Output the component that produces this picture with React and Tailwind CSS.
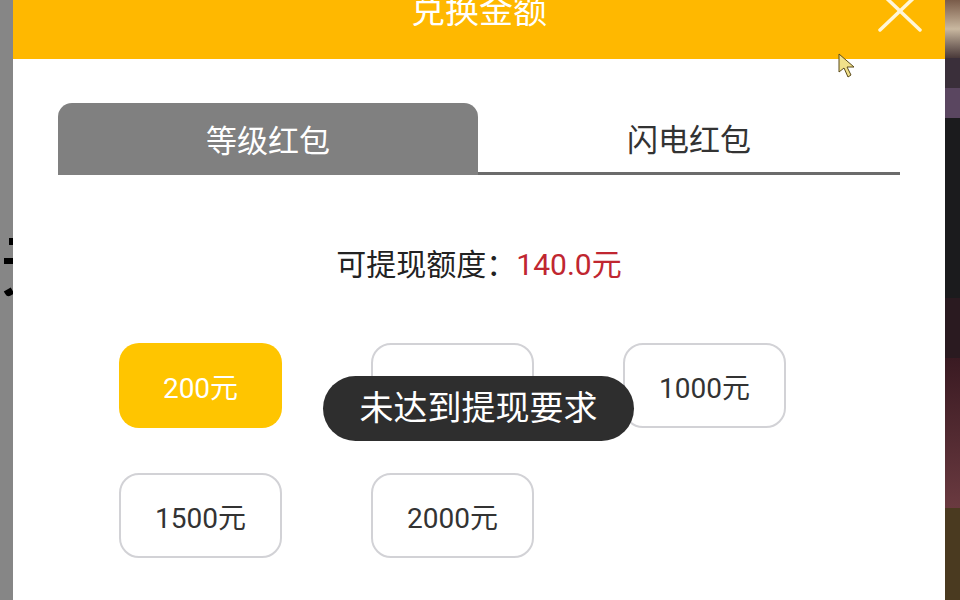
import React from "react";

const amounts = [
  { label: "200元", active: true },
  { label: "500元" },
  { label: "1000元" },
  { label: "1500元" },
  { label: "2000元" },
];

const App = () => {
  return (
    <div className="w-[960px] h-[600px] flex overflow-hidden font-['Roboto','Noto_Sans_CJK_SC',sans-serif]">
      {/* left edge of the page behind the dialog */}
      <div className="w-[13px] h-full bg-[#868686] flex flex-col items-end">
        <div className="mt-[238px] w-[4px] h-[7px] bg-black" />
        <div className="mt-[13px] w-[9px] h-[6px] bg-black" />
        <div className="mt-[25px] w-[8px] h-[7px] bg-black rounded-bl-[4px] -rotate-[30deg]" />
      </div>

      {/* dialog */}
      <div className="relative flex-1 h-full bg-white flex flex-col">
        <div className="relative h-[59px] bg-[#ffb800] flex justify-center items-start">
          <h1 className="-mt-[6px] text-[34px] leading-[34px] text-white">兑换金额</h1>
          <svg className="absolute right-[21px] -top-[10px]" width="48" height="44" viewBox="0 0 48 44">
            <path d="M4 2 L44 40 M44 2 L4 40" stroke="#fff6d8" strokeWidth="3.5" strokeLinecap="round" />
          </svg>
        </div>

        {/* tabs */}
        <div className="mt-[44px] mx-[45px] grid grid-cols-[420px_1fr] h-[72px]">
          <div className="bg-[#808080] rounded-t-[14px] flex items-center justify-center text-white text-[31px] pt-[6px]">
            等级红包
          </div>
          <div className="border-b-[3px] border-[#6b6b6b] flex items-center justify-center text-[#333] text-[31px] pt-[8px]">
            闪电红包
          </div>
        </div>

        <p className="mt-[70px] text-center text-[30px] leading-[40px] text-[#222]">
          可提现额度：<span className="text-[#c02630]">140.0元</span>
        </p>

        <div className="mt-[58px] pl-[106px] grid grid-cols-[163px_163px_163px] gap-x-[89px] gap-y-[45px]">
          {amounts.map((a) => (
            <div
              key={a.label}
              className={
                a.active
                  ? "h-[85px] rounded-[20px] bg-[#ffc500] flex items-center justify-center pt-[6px] text-white text-[28px]"
                  : "h-[85px] rounded-[20px] border-2 border-[#d2d2d6] bg-white flex items-center justify-center pt-[6px] text-[#333] text-[28px]"
              }
            >
              {a.label}
            </div>
          ))}
        </div>

        {/* toast */}
        <div className="absolute left-[310px] top-[376px] w-[311px] h-[65px] rounded-full bg-[#2e2e2e] flex items-center justify-center text-white text-[34px]">
          未达到提现要求
        </div>

        {/* mouse cursor */}
        <svg className="absolute left-[825px] top-[53px]" width="22" height="26" viewBox="0 0 22 26">
          <path d="M1 1 L1 19 L6 15 L10 24 L13 22 L9 14 L16 14 Z" fill="#f1e08a" stroke="#5a4a1a" strokeWidth="1" />
        </svg>
      </div>

      {/* right edge of the page behind the dialog */}
      <div className="w-[15px] h-full flex flex-col bg-[#1d1a1d]">
        <div className="h-[58px] bg-gradient-to-b from-[#7a5c4a] via-[#c9b8a0] to-[#4a3a3a]" />
        <div className="h-[30px] bg-[#3a2f3a]" />
        <div className="h-[30px] bg-[#5a4660]" />
        <div className="h-[180px] bg-[#1b1b1d]" />
        <div className="h-[60px] bg-[#2a1a20]" />
        <div className="h-[150px] bg-gradient-to-b from-[#3a1a22] to-[#6a3a40]" />
        <div className="flex-1 bg-[#4a3a20]" />
      </div>
    </div>
  );
};

export default App;
